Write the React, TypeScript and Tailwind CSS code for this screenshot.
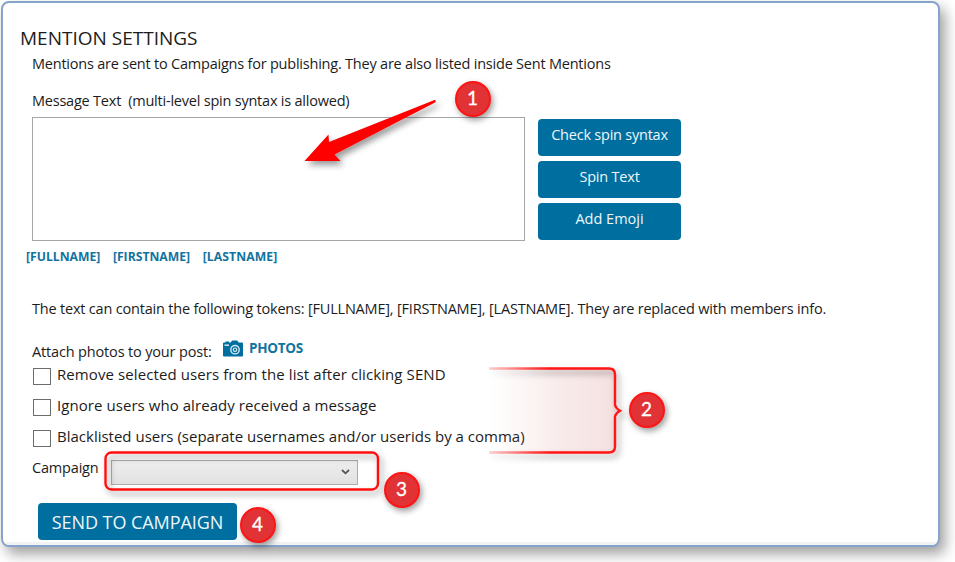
import type { ReactNode } from "react";

function Badge({ n, className }: { n: string; className: string }) {
  return (
    <div
      className={`absolute flex h-[36px] w-[36px] items-center justify-center rounded-full border-2 border-[#ff1414] bg-[#e13236] pr-px pb-[3px] font-['Lato',sans-serif] text-[19px] leading-none text-white shadow-[2px_3px_6px_rgba(0,0,0,0.4)] [-webkit-text-stroke:0.3px_white] ${className}`}
    >
      {n}
    </div>
  );
}

function SideButton({ children, className }: { children: ReactNode; className: string }) {
  return (
    <button className={`flex h-[37px] w-[143px] justify-center rounded-[4px] bg-[#006f9f] pt-[5px] text-[14.5px] leading-[22px] text-[#eef6fa] ${className}`}>
      {children}
    </button>
  );
}

function Option({ children, className }: { children: ReactNode; className: string }) {
  return (
    <label className="flex h-[31px] items-start whitespace-nowrap">
      <span className="mt-[5px] block h-[17px] w-[18px] border border-[#6c6c6c] bg-white" />
      <span className={`ml-[6px] text-[15px] leading-[22px] ${className}`}>{children}</span>
    </label>
  );
}

export default function App() {
  return (
    <div className="relative h-[562px] w-[955px] overflow-hidden bg-white pt-px pl-px font-['Open_Sans','Noto_Sans',sans-serif] text-[14.5px] text-[#1c1c1c]">
      <main className="flex h-[546px] w-[939px] flex-col overflow-hidden rounded-[8px] border-2 border-[#86a4cb] bg-white shadow-[5px_7px_14px_rgba(0,0,0,0.38)]">
        <h1 className="mt-[22px] ml-[17px] h-[29px] text-[19px] leading-[26px] whitespace-nowrap">MENTION SETTINGS</h1>
        <p className="ml-[29px] h-[37px] leading-[20px] tracking-[-0.218px] whitespace-nowrap">Mentions are sent to Campaigns for publishing. They are also listed inside Sent Mentions</p>
        <p className="ml-[29px] h-[26px] leading-[20px] tracking-[-0.22px] whitespace-pre">Message Text  (multi-level spin syntax is allowed)</p>
        <div className="ml-[29px] flex h-[124px]">
          <div className="h-[124px] w-[493px] border border-[#a5a5ab]" />
          <div className="mt-[2px] ml-[13px] flex flex-col gap-[5px]">
            <SideButton className="tracking-[-0.23px]">Check spin syntax</SideButton>
            <SideButton className="tracking-[-0.2px]">Spin Text</SideButton>
            <SideButton className="">Add Emoji</SideButton>
          </div>
        </div>
        <div className="mt-[5px] ml-[23px] flex h-[22px] gap-[12.5px] text-[12.2px] leading-[22px] font-bold text-[#12739f]">
          <span>[FULLNAME]</span>
          <span>[FIRSTNAME]</span>
          <span className="tracking-[0.1px]">[LASTNAME]</span>
        </div>
        <p className="mt-[31px] ml-[29px] h-[20px] leading-[20px] tracking-[-0.198px] whitespace-nowrap">The text can contain the following tokens: [FULLNAME], [FIRSTNAME], [LASTNAME]. They are replaced with members info.</p>
        <div className="mt-[18px] ml-[29px] flex h-[24px] whitespace-nowrap">
          <span className="mt-[5px] w-[191px] leading-[20px] tracking-[-0.16px]">Attach photos to your post:</span>
          <svg className="mt-[3px] h-[17px] w-[20px]" viewBox="0 0 20 17">
            <path d="M1 2.500h1.500V1.500h3.500v1h1.500L9.300 0.500h5L15.600 2.500H19q1 0 1 1V15.500q0 1-1 1H1q-1 0-1-1V3.500q0-1 1-1Z" fill="#006f9f" />
            <path d="M1.500 5.200h4.500" stroke="#c9e2ec" strokeWidth="1.600" />
            <circle cx="12" cy="9.700" r="4.200" fill="none" stroke="#d5e9f1" strokeWidth="1.400" />
            <circle cx="12" cy="9.700" r="1.700" fill="none" stroke="#d5e9f1" strokeWidth="1.200" />
          </svg>
          <span className="ml-[6px] text-[13.5px] leading-[22px] font-bold tracking-[-0.25px] text-[#12739f]">PHOTOS</span>
        </div>
        <div className="ml-[30px] flex flex-col pt-[2px]">
          <Option className="tracking-[0.09px]">Remove selected users from the list after clicking SEND</Option>
          <Option className="tracking-[0.06px]">Ignore users who already received a message</Option>
          <Option className="">Blacklisted users (separate usernames and/or userids by a comma)</Option>
        </div>
        <div className="ml-[29px] flex h-[47px]">
          <span className="mt-[2px] w-[79px] leading-[20px] tracking-[-0.18px]">Campaign</span>
          <div className="mt-[4px] flex h-[25px] w-[247px] items-center justify-end border border-[#acacac] bg-gradient-to-b from-[#eeeeee] to-[#e1e1e1] pr-[7px] pb-[2px]">
            <svg className="h-[6px] w-[9px]" viewBox="0 0 9 6"><path d="M1 1l3.500 3.300L8 1" fill="none" stroke="#555" strokeWidth="1.8" /></svg>
          </div>
        </div>
        <button className="ml-[35px] h-[37px] w-[199px] shrink-0 rounded-[4px] bg-[#006f9f] text-[18px] leading-[36px] tracking-[-0.05px] whitespace-nowrap text-[#eef6fa]">SEND TO CAMPAIGN</button>
        <div className="mt-auto h-[3px] shrink-0 bg-[#f1f2f4]" />
      </main>

      <svg className="pointer-events-none absolute top-0 left-0 h-[562px] w-[955px]" viewBox="0 0 955 562">
        <defs>
          <linearGradient id="area" gradientUnits="userSpaceOnUse" x1="489" x2="615" y1="0" y2="0">
            <stop offset="0" stopColor="#d66" stopOpacity="0" />
            <stop offset="0.5" stopColor="#c84848" stopOpacity="0.1" />
            <stop offset="1" stopColor="#c43c3c" stopOpacity="0.16" />
          </linearGradient>
          <linearGradient id="edge" gradientUnits="userSpaceOnUse" x1="487" x2="550" y1="0" y2="0">
            <stop offset="0" stopColor="#ff1414" stopOpacity="0.15" />
            <stop offset="1" stopColor="#ff1414" />
          </linearGradient>
          <filter id="drop" x="-20%" y="-20%" width="140%" height="150%">
            <feDropShadow dx="3" dy="4" stdDeviation="3" floodOpacity="0.4" />
          </filter>
        </defs>
        <path d="M304.500 161L328.500 134.500L329 142L434.500 100Q437 100 435 102.500L334.500 154.500L340.500 161Z" fill="#ff0000" filter="url(#drop)" />
        <path d="M489 368.500H609Q615 368.500 615 374.500V405Q616 408.500 620 410.700Q616 413 615 416.500V446.500Q615 452.500 609 452.500H489Z" fill="url(#area)" />
        <path d="M489 368.500H609Q615 368.500 615 374.500V405Q616 408.500 620 410.700Q616 413 615 416.500V446.500Q615 452.500 609 452.500H489" fill="none" stroke="url(#edge)" strokeWidth="2.4" filter="url(#drop)" />
        <rect x="105.500" y="452.500" width="272.500" height="37" rx="6" fill="none" stroke="#ff1010" strokeWidth="2.4" filter="url(#drop)" />
      </svg>
      <Badge n="1" className="top-[81px] left-[455px]" />
      <Badge n="2" className="top-[392px] left-[629px]" />
      <Badge n="3" className="top-[472px] left-[384px]" />
      <Badge n="4" className="top-[507px] left-[240px]" />
    </div>
  );
}
